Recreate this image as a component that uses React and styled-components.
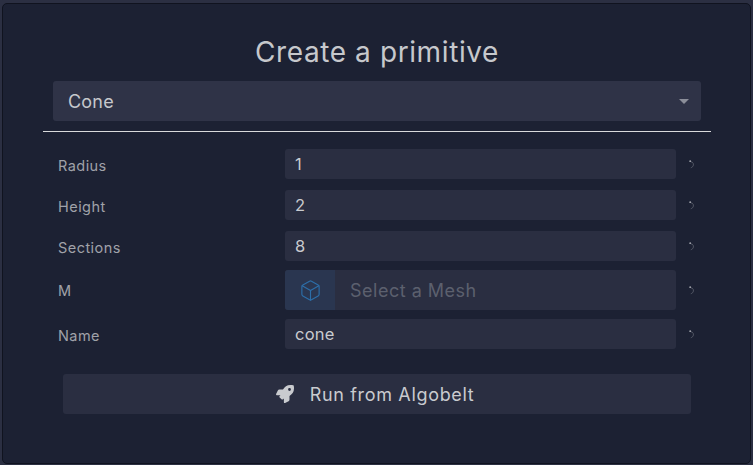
import React from "react";
import styled, { createGlobalStyle } from "styled-components";
import { FaRocket } from "react-icons/fa";
import { Box } from "lucide-react";

const Global = createGlobalStyle`
  html, body { margin: 0; padding: 0; height: 100%; background: #2b2f42; }
  #root { height: 100%; }
  * { box-sizing: border-box; }
`;

const Page = styled.div`
  width: 753px;
  height: 465px;
  padding: 3px 2px 1px;
  background: #2b2f42;
  font-family: Inter, "Liberation Sans", sans-serif;
  overflow: hidden;
`;

const Modal = styled.div`
  height: 461px;
  background: #1c2133;
  border: 1px solid #10131f;
  border-radius: 5px;
  padding: 30px 39px 0 40px;
  display: flex;
  flex-direction: column;
`;

const Title = styled.h1`
  margin: 0;
  height: 40px;
  font-size: 28px;
  line-height: 37px;
  font-weight: 400;
  letter-spacing: 0.6px;
  text-align: center;
  color: #c6c8cc;
`;

const Select = styled.div`
  margin: 7px 10px 0;
  height: 40px;
  display: flex;
  align-items: center;
  justify-content: space-between;
  padding: 0 12px 0 15px;
  background: #2f3347;
  border-radius: 3px;
  font-size: 18px;
  letter-spacing: 0.2px;
  color: #c6c8cc;
`;

const Caret = styled.span`
  width: 0;
  height: 0;
  border-left: 5px solid transparent;
  border-right: 5px solid transparent;
  border-top: 5px solid #8b8e99;
`;

const Rule = styled.hr`
  margin: 10px 0 0;
  border: 0;
  height: 1px;
  background: #d9dadc;
`;

const Rows = styled.div`
  margin-top: 17px;
  display: flex;
  flex-direction: column;
`;

const Row = styled.div`
  display: grid;
  grid-template-columns: 227px 391px 24px;
  align-items: center;
  height: ${(p) => (p.$tall ? 40 : 30)}px;
  margin-top: ${(p) => p.$gap || 0}px;
  padding-left: 15px;
`;

const Label = styled.label`
  font-size: 14.5px;
  letter-spacing: 0.45px;
  color: #a0a2a9;
  padding-top: ${(p) => (p.$tall ? 1 : 3)}px;
`;

const Field = styled.div`
  height: 30px;
  display: flex;
  align-items: center;
  padding: 0 0 1px 10px;
  background: #2a2e41;
  border-radius: 3px;
  font-size: 16.5px;
  letter-spacing: 0.2px;
  color: #c9cbcf;
`;

const MeshField = styled.div`
  height: 40px;
  display: flex;
  background: #2a2e41;
  border-radius: 3px;
  overflow: hidden;
`;

const MeshIcon = styled.div`
  width: 50px;
  display: flex;
  align-items: center;
  justify-content: center;
  background: #2a3650;
  color: #2c6ea8;
`;

const Placeholder = styled.div`
  flex: 1;
  display: flex;
  align-items: center;
  padding-left: 15px;
  font-size: 18px;
  letter-spacing: 0.5px;
  color: #5c606e;
`;

const Reset = styled.button`
  justify-self: start;
  width: 6px;
  padding: 0;
  margin: 0 0 0 13px;
  border: 0;
  background: none;
  display: flex;
  color: #666a77;
`;

const Run = styled.button`
  margin: 25px 20px 0;
  height: 40px;
  border: 0;
  border-radius: 3px;
  padding: 0 4px 0 0;
  background: #2a2e41;
  color: #c9cbcf;
  font-family: inherit;
  font-size: 18px;
  letter-spacing: 0.67px;
  display: flex;
  align-items: center;
  justify-content: center;
  gap: 16px;
`;

const ResetIcon = () => (
  <svg width="6" height="9" viewBox="0 0 6 9" fill="none" stroke="currentColor" strokeWidth="0.7">
    <circle cx="1.2" cy="1.2" r="0.9" fill="#a9abb3" stroke="none" />
    <path d="M1.8 1.8 C3.8 2 4.6 3.4 4.4 5 C4.2 6.4 3.2 7.3 1.8 7.8" />
  </svg>
);

const fields = [
  { label: "Radius", value: "1", gap: 0 },
  { label: "Height", value: "2", gap: 11 },
  { label: "Sections", value: "8", gap: 11 },
];

export default function App() {
  return (
    <Page>
      <Global />
      <Modal>
        <Title>Create a primitive</Title>
        <Select>
          Cone
          <Caret />
        </Select>
        <Rule />
        <Rows>
          {fields.map((f) => (
            <Row key={f.label} $gap={f.gap}>
              <Label>{f.label}</Label>
              <Field>{f.value}</Field>
              <Reset><ResetIcon /></Reset>
            </Row>
          ))}
          <Row $tall $gap={9}>
            <Label $tall>M</Label>
            <MeshField>
              <MeshIcon><Box size={23} strokeWidth={1.2} /></MeshIcon>
              <Placeholder>Select a Mesh</Placeholder>
            </MeshField>
            <Reset><ResetIcon /></Reset>
          </Row>
          <Row $gap={9}>
            <Label>Name</Label>
            <Field>cone</Field>
            <Reset><ResetIcon /></Reset>
          </Row>
        </Rows>
        <Run>
          <FaRocket size={18} />
          Run from Algobelt
        </Run>
      </Modal>
    </Page>
  );
}
